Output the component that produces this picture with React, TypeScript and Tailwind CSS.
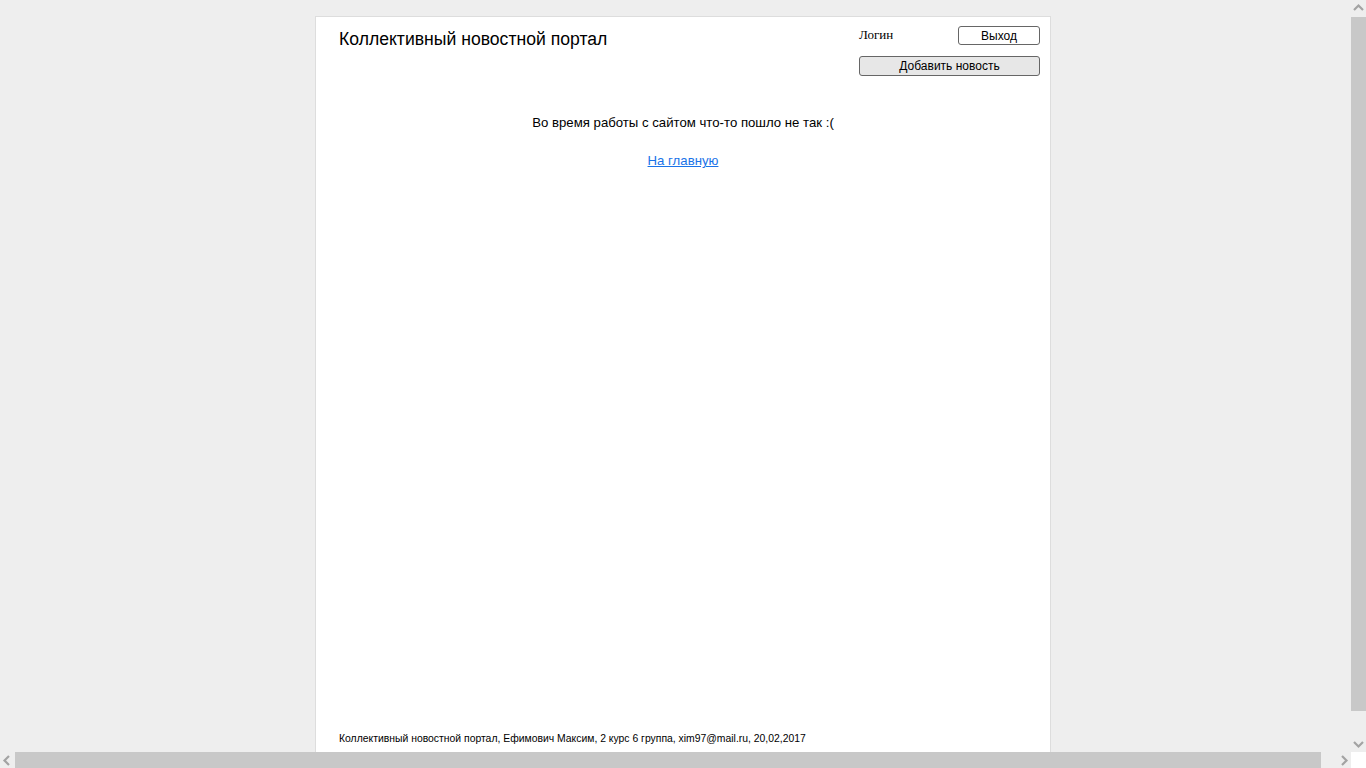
import React from "react";

function ScrollArrow({ dir }: { dir: "up" | "down" | "left" | "right" }) {
  const paths: Record<string, string> = {
    up: "M3 9 L7.5 4.5 L12 9",
    down: "M3 6 L7.5 10.5 L12 6",
    left: "M9 3 L4.5 7.5 L9 12",
    right: "M6 3 L10.5 7.5 L6 12",
  };
  return (
    <svg width="15" height="15" viewBox="0 0 15 15">
      <path d={paths[dir]} fill="none" stroke="#a3a3a3" strokeWidth="2.2" />
    </svg>
  );
}

export default function App() {
  return (
    <div className="h-screen w-screen flex flex-col overflow-hidden bg-[#eeeeee]" style={{ fontFamily: '"Liberation Sans", Arial, sans-serif' }}>
      <div className="flex flex-1 min-h-0">
        {/* page */}
        <div className="flex-1 min-w-0 overflow-hidden pt-[16px]">
          <div className="ml-[315px] w-[736px] h-[760px] bg-white border border-[#dddddd] flex flex-col">
            <div className="flex justify-between pl-[23px] pr-[10px] pt-[9px]">
              <h1 className="text-[17.6px] leading-[26px] text-black">Коллективный новостной портал</h1>
              <div className="flex flex-col w-[181px] gap-[11px]">
                <div className="flex items-center justify-between">
                  <span className="text-[13px] leading-[15px] -mt-[2px] text-black" style={{ fontFamily: '"Liberation Serif", "Times New Roman", serif' }}>
                    Логин
                  </span>
                  <button className="w-[82px] h-[19px] border border-[#666666] rounded-[3px] bg-white text-[12px] leading-[16px] text-black">
                    Выход
                  </button>
                </div>
                <button className="w-full h-[20px] border border-[#666666] rounded-[3px] bg-[#e7e7e7] text-[12px] leading-[17px] text-black">
                  Добавить новость
                </button>
              </div>
            </div>
            <div className="flex flex-col items-center mt-[38px]">
              <p className="text-[13.2px] leading-[18px] text-black">Во время работы с сайтом что-то пошло не так :(</p>
              <a href="#" className="mt-[20px] text-[13.2px] leading-[18px] text-[#1a73e8] underline">
                На главную
              </a>
            </div>
            <div className="flex-1" />
            <p className="pl-[23px] pb-[30px] text-[10.4px] leading-[12px] text-black">
              Коллективный новостной портал, Ефимович Максим, 2 курс 6 группа, xim97@mail.ru, 20,02,2017
            </p>
          </div>
        </div>
        {/* vertical scrollbar */}
        <div className="w-[15px] flex flex-col bg-[#eeeeee]">
          <div className="h-[17px] flex items-center justify-center">
            <ScrollArrow dir="up" />
          </div>
          <div className="h-[694px] bg-[#c8c8c8]" />
          <div className="flex-1" />
          <div className="h-[17px] flex items-center justify-center">
            <ScrollArrow dir="down" />
          </div>
        </div>
      </div>
      {/* horizontal scrollbar */}
      <div className="h-[16px] flex bg-[#eeeeee]">
        <div className="w-[15px] flex items-center justify-center">
          <ScrollArrow dir="left" />
        </div>
        <div className="w-[1306px] bg-[#c8c8c8]" />
        <div className="flex-1" />
        <div className="w-[15px] flex items-center justify-center">
          <ScrollArrow dir="right" />
        </div>
        <div className="w-[15px] bg-white" />
      </div>
    </div>
  );
}
